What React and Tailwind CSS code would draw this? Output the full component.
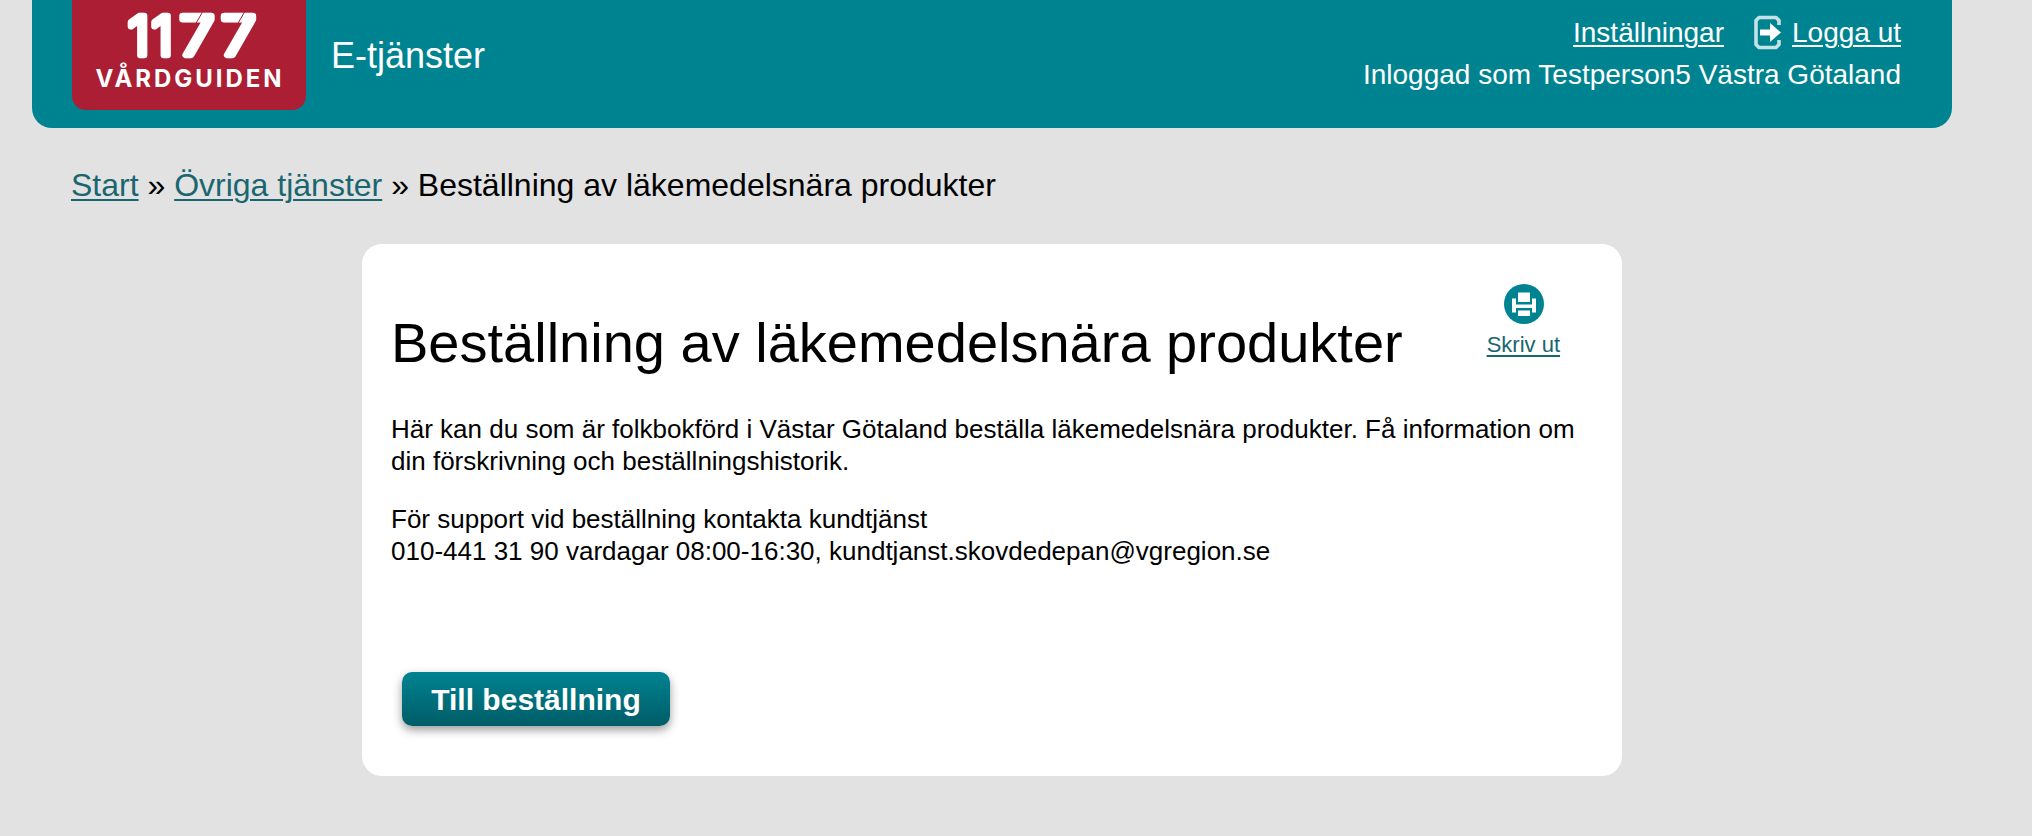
const linkClass = "text-[#1a6670] underline decoration-2 underline-offset-[3px]";

function Logo() {
  return (
    <a href="#" aria-label="1177 Vårdguiden" className="block h-[110px] w-[234px] rounded-b-[14px] bg-[#ab1e34]">
      <svg width="234" height="110" viewBox="0 0 234 110" fill="#fff">
        <g
          fontFamily="Inter, sans-serif"
          fontSize="54"
          fontWeight="300"
          stroke="#fff"
          strokeWidth="6.500"
          strokeLinejoin="round"
        >
          <text y="55" x="56 79.500">11</text>
          <text y="55" x="94.500 131" transform="scale(1.140 1)">77</text>
        </g>
        <path d="M130.500 12L123 25M172.500 12L165 25" stroke="#ab1e34" strokeWidth="1" />
        <text
          x="23.500"
          y="87"
          fontFamily="Inter, sans-serif"
          fontSize="24"
          fontWeight="700"
          textLength="186"
          lengthAdjust="spacing"
        >
          VÅRDGUIDEN
        </text>
      </svg>
    </a>
  );
}

function LogoutIcon() {
  return (
    <svg width="30" height="36" viewBox="0 0 30 36" fill="none">
      <path
        d="M26 10V5.500L23 2.500H6L3 5.500V29.500L6 32.500H23L26 29.500V25"
        stroke="#c4e3e6"
        strokeWidth="3.600"
        strokeLinejoin="round"
      />
      <path d="M7 14.500H17V8L28 17.500L17 27V20.500H7Z" fill="#fff" />
    </svg>
  );
}

function PrintIcon() {
  return (
    <svg width="40" height="40" viewBox="0 0 40 40">
      <circle cx="20" cy="20" r="20" fill="#008391" />
      <path d="M14 8.500H26V18H14Z M8 14.500H12V20.500H28V14.500H32V28.500H28V24H12V28.500H8Z M14 26.500H26V32H14Z" fill="#fff" />
    </svg>
  );
}

export default function App() {
  return (
    <div className="h-[836px] overflow-hidden bg-[#e2e2e2] font-['Liberation_Sans',Arial,sans-serif] text-black">
      <header className="ml-8 flex h-32 w-[1920px] justify-between rounded-b-[20px] bg-[#008391] pr-[51px] pl-10 text-white">
        <div className="flex gap-[25px]">
          <Logo />
          <span className="text-4xl leading-[112px]">E-tjänster</span>
        </div>
        <div className="pt-3 text-right text-[28px] leading-[42px]">
          <nav className="flex items-center justify-end">
            <a href="#" className="underline decoration-2 underline-offset-[3px]">Inställningar</a>
            <a href="#" className="ml-[29px] flex items-center gap-[9px]">
              <LogoutIcon />
              <span className="underline decoration-2 underline-offset-[3px]">Logga ut</span>
            </a>
          </nav>
          <p>Inloggad som Testperson5 Västra Götaland</p>
        </div>
      </header>

      <nav className="mt-[39px] ml-[71px] text-[32px] leading-9">
        <a href="#" className={linkClass}>Start</a> »{" "}
        <a href="#" className={linkClass}>Övriga tjänster</a> » Beställning av läkemedelsnära produkter
      </nav>

      <main className="mt-[41px] ml-[362px] h-[532px] w-[1260px] rounded-[20px] bg-white pr-[40px] pl-[29px]">
        <div className="flex justify-between">
          <h1 className="pt-[67px] text-[56px] leading-[64px]">Beställning av läkemedelsnära produkter</h1>
          <a href="#" className="mt-10 mr-[22px] flex flex-col items-center text-[22px] leading-[26px]">
            <span className="pl-0.5">
              <PrintIcon />
            </span>
            <span className={"mt-2 " + linkClass}>Skriv ut</span>
          </a>
        </div>
        <div className="mt-[38px] space-y-[26px] text-[26px] leading-8">
          <p>
            Här kan du som är folkbokförd i Västar Götaland beställa läkemedelsnära produkter. Få information om
            din förskrivning och beställningshistorik.
          </p>
          <p>
            För support vid beställning kontakta kundtjänst
            <br />
            010-441 31 90 vardagar 08:00-16:30, kundtjanst.skovdedepan@vgregion.se
          </p>
        </div>
        <button className="mt-[105px] ml-[11px] block h-[54px] w-[268px] rounded-[10px] bg-linear-to-b from-[#008391] to-[#005d68] pt-px text-[30px] leading-[54px] font-bold whitespace-nowrap text-white shadow-[0_4px_10px_rgba(0,0,0,0.4)]">
          Till beställning
        </button>
      </main>
    </div>
  );
}
